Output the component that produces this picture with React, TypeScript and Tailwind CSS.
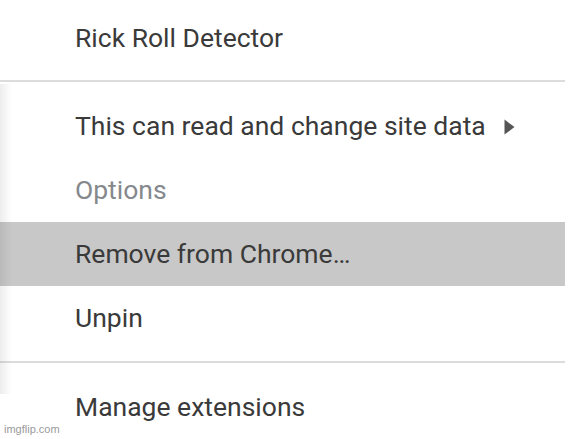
import React from 'react';

const font = { fontFamily: 'Roboto, "Noto Sans", sans-serif' };

const Row: React.FC<{ label: string; muted?: boolean; active?: boolean; arrow?: boolean }> = ({
  label,
  muted,
  active,
  arrow,
}) => (
  <div
    className={`flex h-16 items-center pl-[75px] pr-[50px] text-[26.5px] ${
      active ? 'bg-[#c8c8c8]' : ''
    } ${muted ? 'text-[#85888c]' : 'text-[#3a3a3a]'}`}
  >
    <span className="flex-1">{label}</span>
    {arrow && (
      <svg width="11" height="16" viewBox="0 0 11 16" className="mt-[1px]">
        <path d="M0.5 0.5 L10.5 8 L0.5 15.5 Z" fill="#555555" />
      </svg>
    )}
  </div>
);

const Separator: React.FC = () => <div className="h-[2px] bg-[#dcdcdc]" />;

export default function App() {
  return (
    <div className="relative h-[439px] w-[568px] overflow-hidden bg-white" style={font}>
      <div className="w-[565px] pt-[6px]">
        <div className="flex h-16 items-center pl-[75px] text-[26.5px] text-[#3a3a3a]">Rick Roll Detector</div>
        <div className="mt-[10px]">
          <Separator />
        </div>
        <div className="pt-3 pb-[11px]">
          <Row label="This can read and change site data" arrow />
          <Row label="Options" muted />
          <Row label="Remove from Chrome…" active />
          <Row label="Unpin" />
        </div>
        <Separator />
        <div className="pt-3">
          <Row label="Manage extensions" />
        </div>
      </div>

      {/* faint shadow of the panel edge */}
      <div className="pointer-events-none absolute left-0 top-[84px] h-[310px] w-[12px] bg-gradient-to-r from-[#00000012] to-transparent" />

      <div className="absolute bottom-[2px] left-[4px] text-[11px] text-[#9a9a9a]" style={{ fontFamily: '"Liberation Sans", Arial, sans-serif' }}>
        imgflip.com
      </div>
    </div>
  );
}
